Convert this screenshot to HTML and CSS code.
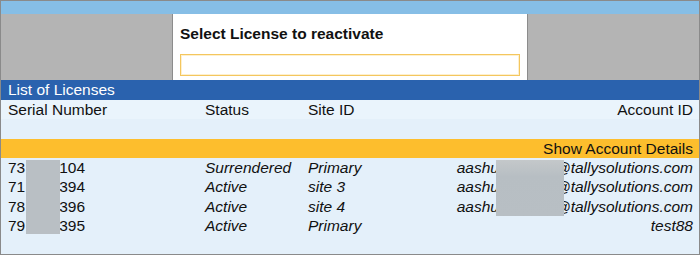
FILE: index.html
```html
<!DOCTYPE html>
<html>
	<head>
		<meta charset='utf-8' />
		<title>List of Licenses</title>
		<link rel="stylesheet" href="styles.css">
	</head>
	<body>
		<div class="frame">
			<div class="topbar"></div>

			<div class="upper">
				<div class="side"></div>
				<div class="dialog">
					<div class="dialog-title">Select License to reactivate</div>
					<div class="dialog-input"></div>
				</div>
				<div class="side"></div>
			</div>

			<div class="list-title">List of Licenses</div>

			<div class="grid head">
				<div>Serial Number</div>
				<div>Status</div>
				<div>Site ID</div>
				<div class="right">Account ID</div>
			</div>
			<div class="blank"></div>

			<div class="details">Show Account Details</div>

			<div class="rows">
				<div class="grid row">
					<div>73<span class="gap"></span>104</div>
					<div class="it">Surrendered</div>
					<div class="it">Primary</div>
					<div class="it right">aashu<span class="gap2"></span>@tallysolutions.com</div>
				</div>
				<div class="grid row">
					<div>71<span class="gap"></span>394</div>
					<div class="it">Active</div>
					<div class="it">site 3</div>
					<div class="it right">aashu<span class="gap2"></span>@tallysolutions.com</div>
				</div>
				<div class="grid row">
					<div>78<span class="gap"></span>396</div>
					<div class="it">Active</div>
					<div class="it">site 4</div>
					<div class="it right">aashu<span class="gap2"></span>@tallysolutions.com</div>
				</div>
				<div class="grid row">
					<div>79<span class="gap"></span>395</div>
					<div class="it">Active</div>
					<div class="it">Primary</div>
					<div class="it right">test88</div>
				</div>

				<!-- redacted areas -->
				<div class="mask mask-serial"></div>
				<div class="mask mask-mail"></div>
			</div>
		</div>
	</body>
</html>
```

FILE: styles.css
```css
body{
	margin:0;
	font: normal 15.5px "Liberation Sans", Arial, sans-serif;
	color:#111;
}
.frame{
	width:700px;
	height:255px;
	box-sizing:border-box;
	border:1px solid #8a8a8a;
	background-color:#e4f0fa;
	overflow:hidden;
}
.topbar{
	height:13px;
	background-color:#86bee6;
}
.upper{
	display:flex;
	height:66px;
}
.side{
	flex:1;
	background-color:#b4b4b4;
}
.dialog{
	width:356px;
	box-sizing:border-box;
	border-left:1px solid #8c8c8c;
	border-right:1px solid #8c8c8c;
	background-color:#fff;
	padding:11px 7px 0 7px;
}
.dialog-title{
	font-weight:bold;
	line-height:18px;
}
.dialog-input{
	margin-top:11px;
	height:22px;
	box-sizing:border-box;
	border:1px solid #f4c65e;
	box-shadow: inset 0 0 0 1px #fdf0cf;
}
.list-title{
	height:20px;
	line-height:20px;
	padding-left:7px;
	background-color:#2a62ae;
	color:#fff;
}
.grid{
	display:grid;
	grid-template-columns:197px 103px 100px 1fr;
	padding:0 6px 0 7px;
}
.right{
	text-align:right;
}
.it{
	font-style:italic;
}
.head{
	line-height:19px;
	background-color:#eaf4fc;
}
.blank{
	height:20px;
}
.details{
	height:19px;
	line-height:19px;
	text-align:right;
	padding-right:6px;
	background-color:#fdbe2d;
}
.rows{
	position:relative;
}
.row{
	line-height:19.4px;
}
.gap{
	display:inline-block;
	width:34px;
}
.gap2{
	display:inline-block;
	width:56px;
}
.mask{
	position:absolute;
	background-color:#b9bfc4;
	filter:blur(0.6px);
}
.mask-serial{
	left:25px;
	top:2px;
	width:34px;
	height:74px;
}
.mask-mail{
	left:495px;
	top:2px;
	width:68px;
	height:56px;
	background:linear-gradient(#c4c8ca, #b7bec3 30%, #b8bfc4);
}
```
